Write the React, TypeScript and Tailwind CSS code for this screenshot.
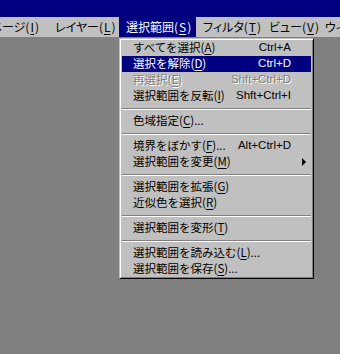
import React from "react";

const jp = "font-['Noto_Sans_CJK_JP','Noto_Sans',sans-serif]";

type Item =
  | { sep: true }
  | {
      sep?: false;
      label: string;
      key: string;
      after?: string;
      shortcut?: string;
      active?: boolean;
      disabled?: boolean;
      sub?: boolean;
    };

const items: Item[] = [
  { label: "すべてを選択", key: "A", shortcut: "Ctrl+A" },
  { label: "選択を解除", key: "D", shortcut: "Ctrl+D", active: true },
  { label: "再選択", key: "E", shortcut: "Shft+Ctrl+D", disabled: true },
  { label: "選択範囲を反転", key: "I", shortcut: "Shft+Ctrl+I" },
  { sep: true },
  { label: "色域指定", key: "C", after: "..." },
  { sep: true },
  { label: "境界をぼかす", key: "F", after: "...", shortcut: "Alt+Ctrl+D" },
  { label: "選択範囲を変更", key: "M", sub: true },
  { sep: true },
  { label: "選択範囲を拡張", key: "G" },
  { label: "近似色を選択", key: "R" },
  { sep: true },
  { label: "選択範囲を変形", key: "T" },
  { sep: true },
  { label: "選択範囲を読み込む", key: "L", after: "..." },
  { label: "選択範囲を保存", key: "S", after: "..." },
];

function Label({ label, k, after }: { label: string; k: string; after?: string }) {
  return (
    <span className="whitespace-nowrap">
      {label}(<span className="underline underline-offset-2">{k}</span>){after ?? ""}
    </span>
  );
}

function BarLabel({ label, k }: { label: string; k: string }) {
  return (
    <span className="whitespace-nowrap">
      <span className="[font-feature-settings:'palt']">{label}</span>(
      <span className="underline underline-offset-2 px-px">{k}</span>)
    </span>
  );
}

export default function App() {
  return (
    <div className="relative w-[340px] h-[354px] bg-[#808080] overflow-hidden">
      <div className="h-[17px] bg-[#000080]" />
      <div className={`h-[20px] bg-[#c0c0c0] flex items-center overflow-hidden text-[12px] text-black ${jp}`}>
        <div className="shrink-0 w-[48px] h-full flex items-center justify-end pr-[9px] overflow-hidden whitespace-nowrap">
          <span className="shrink-0">
            <BarLabel label="イメージ" k="I" />
          </span>
        </div>
        <div className="shrink-0 w-[71px] h-full flex items-center pl-[7px] whitespace-nowrap">
          <BarLabel label="レイヤー" k="L" />
        </div>
        <div className="shrink-0 w-[77px] h-full flex items-center pl-[7px] whitespace-nowrap bg-[#000080] text-white">
          <BarLabel label="選択範囲" k="S" />
        </div>
        <div className="shrink-0 w-[66px] h-full flex items-center pl-[7px] whitespace-nowrap">
          <BarLabel label="フィルタ" k="T" />
        </div>
        <div className="shrink-0 w-[56px] h-full flex items-center pl-[7px] whitespace-nowrap">
          <BarLabel label="ビュー" k="V" />
        </div>
        <div className="shrink-0 h-full flex items-center pl-[7px] whitespace-nowrap">
          <BarLabel label="ウィンドウ" k="W" />
        </div>
      </div>

      <div className="absolute left-[119px] top-[38px] w-[195px] bg-[#c0c0c0] border border-t-[#c0c0c0] border-l-[#c0c0c0] border-r-black border-b-black shadow-[inset_1px_1px_0_#ffffff,inset_-1px_-1px_0_#808080] pt-px pb-px pl-[2px] pr-[2px]">
        {items.map((it, i) =>
          it.sep ? (
            <div key={i} className="h-[9px] flex flex-col justify-center">
              <div className="h-px bg-[#808080]" />
              <div className="h-px bg-white" />
            </div>
          ) : (
            <div
              key={i}
              className={`relative h-[16px] flex items-center pl-[11px] pr-[20px] text-[11.5px] leading-none ${
                it.active ? "bg-[#000080] text-white" : it.disabled ? "text-[#808080] [text-shadow:1px_1px_0_#ffffff]" : "text-black"
              }`}
            >
              <span className={jp}>
                <Label label={it.label} k={it.key} after={it.after} />
              </span>
              {it.shortcut && (
                <span className="ml-auto font-['Liberation_Sans',Arial,sans-serif] text-[11.5px] whitespace-nowrap">
                  {it.shortcut}
                </span>
              )}
              {it.sub && (
                <span className="absolute right-[5px] top-[4px] w-0 h-0 border-y-[4px] border-y-transparent border-l-[4px] border-l-black" />
              )}
            </div>
          )
        )}
      </div>
    </div>
  );
}
